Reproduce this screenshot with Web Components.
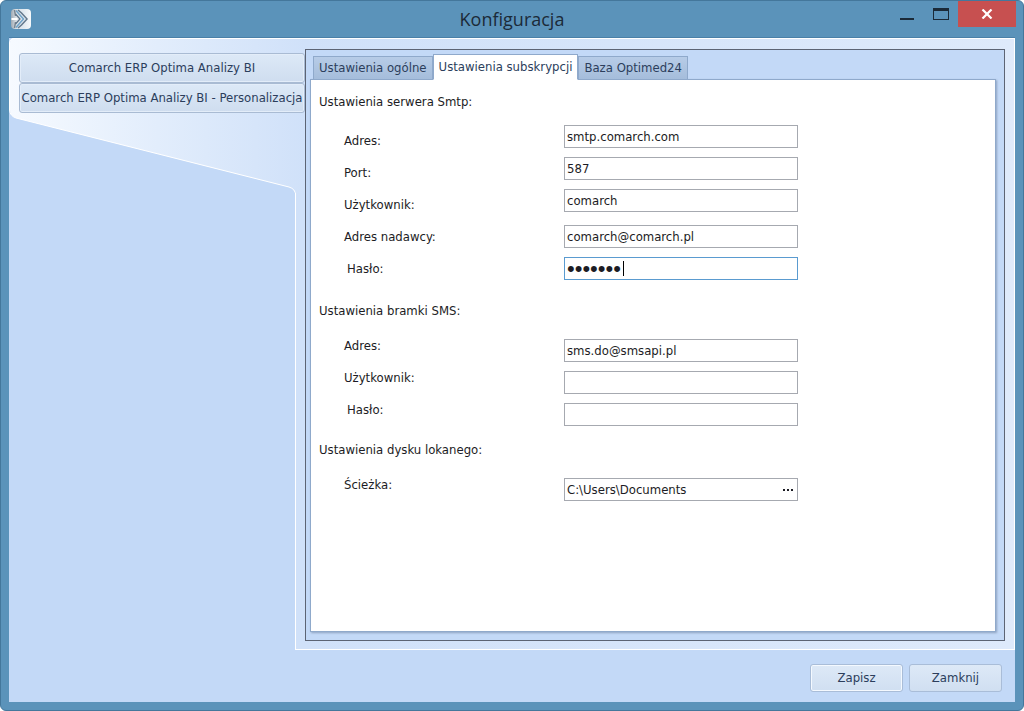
<!DOCTYPE html>
<html lang="pl">
<head>
<meta charset="utf-8">
<title>Konfiguracja</title>
<style>
  html, body { margin: 0; height: 100%; background: #fff; }
  body { font: 13px/16px "DejaVu Sans Condensed", "DejaVu Sans", Tahoma, sans-serif; color: #1c1c24; }
</style>
</head>
<body>
<app-window heading="Konfiguracja">
  <side-nav slot="nav">
    <nav-button>Comarch ERP Optima Analizy BI</nav-button>
    <nav-button>Comarch ERP Optima Analizy BI - Personalizacja</nav-button>
  </side-nav>
  <tab-panel>
    <tab-button slot="tabs">Ustawienia ogólne</tab-button>
    <tab-button slot="tabs" active>Ustawienia subskrypcji</tab-button>
    <tab-button slot="tabs">Baza Optimed24</tab-button>
    <form-section heading="Ustawienia serwera Smtp:">
      <form-row place="top" value="smtp.comarch.com">Adres:</form-row>
      <form-row place="top" value="587">Port:</form-row>
      <form-row place="top" value="comarch">Użytkownik:</form-row>
      <form-row value="comarch@comarch.pl">Adres nadawcy:</form-row>
      <form-row type="password" value="comarch" indent current>Hasło:</form-row>
    </form-section>
    <form-section heading="Ustawienia bramki SMS:" spacing="wide">
      <form-row place="low" value="sms.do@smsapi.pl">Adres:</form-row>
      <form-row place="low" value="">Użytkownik:</form-row>
      <form-row place="low" type="password" value="" indent>Hasło:</form-row>
    </form-section>
    <form-section heading="Ustawienia dysku lokanego:" spacing="narrow">
      <form-row place="low" browse value="C:\Users\Documents">Ścieżka:</form-row>
    </form-section>
  </tab-panel>
  <push-button slot="actions" primary>Zapisz</push-button>
  <push-button slot="actions">Zamknij</push-button>
</app-window>

<script>
const define = (name, html, setup) => {
  const template = document.createElement('template');
  template.innerHTML = html;
  customElements.define(name, class extends HTMLElement {
    connectedCallback() {
      if (this.shadowRoot) return;
      this.attachShadow({ mode: 'open' }).append(template.content.cloneNode(true));
      if (setup) setup(this, this.shadowRoot);
    }
  });
};

define('app-window', `
<style>
  :host { display: flex; flex-direction: column; box-sizing: border-box; min-height: 100vh; padding: 0 8px 8px;
          background: #5b93ba; border: 1px solid #44779b; border-radius: 6px; }
  header { display: grid; grid-template-columns: 1fr auto 1fr; height: 36px; }
  .logo { margin-top: 7px; margin-left: 1px; }
  h1 { margin: 0; font: 18px/36px "Open Sans", "Noto Sans", sans-serif; color: #1b2a38; }
  .controls { display: flex; justify-content: flex-end; align-items: flex-start; margin-right: -1px; }
  .controls button { width: 34px; height: 26px; padding: 0; border: 0; background: none; display: grid; place-items: center; }
  .controls .close { width: 58px; background: #c75050; }
  main { flex: 1; display: grid; grid-template-columns: 296px minmax(0, 1fr); grid-template-rows: 1fr auto;
         background: #c3d9f7; border-top: 1px solid #4a80a8; }
  .page { display: flex; padding: 10px 9px 8px 0; border: solid #fff; border-width: 1px 1px 1px 0;
          background: linear-gradient(90deg, #d0e1f9, #deeafb); }
  .page slot { display: flex; flex: 1; }
  .page ::slotted(*) { flex: 1; }
  footer { grid-column: 1 / -1; display: flex; justify-content: flex-end; gap: 6px; padding: 14px 13px 10px; }
</style>
<header>
  <svg class="logo" width="22" height="22" viewBox="0 0 22 22" aria-hidden="true">
    <defs><linearGradient id="plate"><stop offset="0" stop-color="#9fa9b3"/><stop offset=".25" stop-color="#d9dfe4"/><stop offset=".6" stop-color="#dfe8ef"/><stop offset="1" stop-color="#f6f9fb"/></linearGradient></defs>
    <rect x="1" y="1" width="20" height="20" rx="4" fill="url(#plate)"/>
    <path d="M4.500 2l1 6M4.500 20l1-6" fill="none" stroke="#7b8792" stroke-width="1.500"/>
    <path d="M8 2l3.500 3 5.500 6-5.500 6L8 20" fill="none" stroke="#63788c" stroke-width="1.500"/>
    <path d="M6 2.500l3 3.500 4.500 5-4.500 5-3 3.500" fill="none" stroke="#6fa3c8" stroke-width="1.500"/>
    <path d="M5.500 6l4.500 5-4.500 5" fill="none" stroke="#5c7287" stroke-width="1.200"/>
    <path d="M1.500 11h6" stroke="#fff" stroke-width="2"/>
  </svg>
  <h1></h1>
  <div class="controls">
    <button type="button" aria-label="Minimalizuj"><svg width="16" height="12" viewBox="0 0 16 12"><path d="M1 10h14v2H1z" fill="#1b2a38"/></svg></button>
    <button type="button" aria-label="Maksymalizuj"><svg width="16" height="12" viewBox="0 0 16 12"><path d="M0 0h16v12H0zM1 3v8h14V3z" fill="#1b2a38" fill-rule="evenodd"/></svg></button>
    <button type="button" class="close" aria-label="Zamknij okno"><svg width="12" height="10" viewBox="0 0 12 10"><path d="M1.500 .5l9 9M10.500 .5l-9 9" stroke="#fff" stroke-width="2.200"/></svg></button>
  </div>
</header>
<main>
  <slot name="nav"></slot>
  <div class="page"><slot></slot></div>
  <footer><slot name="actions"></slot></footer>
</main>`, (host, root) => { root.querySelector('h1').textContent = host.getAttribute('heading'); });

define('side-nav', `
<style>
  :host { display: flex; flex-direction: column; }
  nav { position: relative; height: 155px; box-sizing: border-box; padding: 15px 0 0 10px; }
  svg { position: absolute; left: 0; top: 0; }
  .list { position: relative; display: flex; flex-direction: column; }
  .edge { flex: 1; margin-left: 286px; border: solid #fff; border-width: 0 0 1px 1px; background: #d0e1f9; }
</style>
<nav>
  <svg width="296" height="155" viewBox="0 0 296 155" aria-hidden="true">
    <defs><linearGradient id="g"><stop offset="0" stop-color="#f6faff"/><stop offset=".5" stop-color="#e2edfc"/><stop offset="1" stop-color="#d0e1f9"/></linearGradient></defs>
    <path d="M296 0H5Q1 0 1 5V72Q1 78 7 80L280 149Q286.500 151 286.500 157H296z" fill="url(#g)"/>
    <path d="M296 .5H5Q.5 1 .5 5V72Q1 78 7 80L280 149Q286.500 151 286.500 157" fill="none" stroke="#fff"/>
  </svg>
  <div class="list"><slot></slot></div>
</nav>
<div class="edge"></div>`);

define('nav-button', `
<style>
  :host { display: block; }
  button { width: 100%; height: 30px; padding: 0; border: 1px solid #a9bbd3; border-radius: 3px; font: inherit; color: #2c3e5c;
           white-space: nowrap; background: linear-gradient(#dde9f7, #cfddef); box-shadow: inset 0 0 0 1px #e3edf9; }
</style>
<button type="button"><slot></slot></button>`);

define('push-button', `
<style>
  :host { display: block; }
  button { width: 93px; height: 28px; padding: 0; border: 1px solid #a9bdd8; border-radius: 3px; font: inherit; color: #2c3e5c;
           background: linear-gradient(#dde9f7, #d0dff1); }
  :host([primary]) button { box-shadow: inset 0 0 0 1px #f4f9ff; }
</style>
<button type="button"><slot></slot></button>`);

define('tab-panel', `
<style>
  :host { display: flex; flex-direction: column; padding: 4px 8px 8px 4px; border: 1px solid #5c6474; background: #c3d9f7; }
  .tabs { display: flex; align-items: flex-end; padding-left: 3px; height: 26px; margin-bottom: -1px; z-index: 1; }
  .sheet { flex: 1; padding: 12px 8px; border: 1px solid #8fa9cb; background: #fff; box-shadow: 1px 1px 2px #8fa3c0; }
</style>
<div class="tabs" role="tablist"><slot name="tabs"></slot></div>
<div class="sheet"><slot></slot></div>`);

define('tab-button', `
<style>
  :host { display: block; }
  button { display: block; height: 24px; padding: 0 5px; border: 1px solid #8fa9cb; font: inherit; color: #2c3e5c;
           background: linear-gradient(#b7cce7, #a5bddb); white-space: nowrap; }
  :host([active]) button { height: 26px; border-bottom-color: #fff; background: #fff; }
</style>
<button type="button" role="tab"><slot></slot></button>`, (host, root) => {
  root.querySelector('button').setAttribute('aria-selected', host.hasAttribute('active'));
});

define('form-section', `
<style>
  :host { display: block; }
  :host([spacing="wide"]) { margin-top: 16px; }
  :host([spacing="narrow"]) { margin-top: 10px; }
  h2 { margin: 0 0 13px; font: inherit; line-height: 20px; }
  .rows { padding-left: 25px; }
</style>
<section><h2></h2><div class="rows"><slot></slot></div></section>`, (host, root) => {
  root.querySelector('h2').textContent = host.getAttribute('heading');
});

define('form-row', `
<style>
  :host { display: grid; grid-template-columns: 220px 234px; height: 32px; align-items: start; }
  label { line-height: 32px; }
  .field { position: relative; display: flex; box-sizing: border-box; height: 23px; margin-top: 4px; border: 1px solid #a6a9b0; background: #fff; }
  :host([indent]) label { padding-left: 3px; }
  :host([place="top"]) .field { margin-top: 0; }
  :host([place="low"]) label { line-height: 24px; }
  :host([place="low"]) .field { margin-top: 5px; }
  :host([current]) .field { border-color: #5a9bd0; }
  input { flex: 1; min-width: 0; padding: 0 2px; border: 0; outline: 0; background: none; font: inherit; color: inherit; }
  input[type="password"] { font: 22px/20px "Liberation Sans", Arial, sans-serif; }
  :host([current]) input { caret-color: transparent; }
  :host([current]) .field::after { content: ""; position: absolute; left: 58px; top: 3px; width: 1px; height: 15px; background: #000; }
  .field button { display: grid; place-items: center; width: 18px; padding: 0; border: 0; background: none; }
</style>
<label for="field"><slot></slot></label>
<div class="field"><input id="field"></div>`, (host, root) => {
  const input = root.querySelector('input');
  input.type = host.getAttribute('type') || 'text';
  input.value = host.getAttribute('value');
  if (host.hasAttribute('browse')) {
    const button = document.createElement('button');
    button.type = 'button';
    button.setAttribute('aria-label', 'Przeglądaj');
    button.innerHTML = '<svg width="11" height="2" viewBox="0 0 11 2"><path d="M0 0h2v2H0zM4 0h2v2H4zM8 0h2v2H8z" fill="#1c1c24"/></svg>';
    input.after(button);
  }
  if (host.hasAttribute('current')) {
    input.focus();
  }
});
</script>
</body>
</html>
